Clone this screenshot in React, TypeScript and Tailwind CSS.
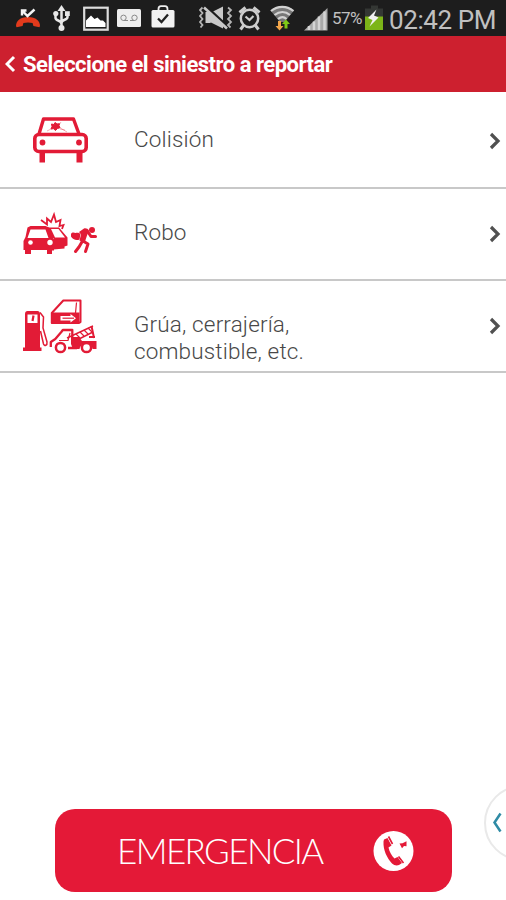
import type { ReactNode } from "react";

function MissedCallIcon() {
  return (
    <svg className="ml-4 h-9 w-6" viewBox="16 0 24 36" fill="none">
      <path d="M16 26c0-5 4-9 12-9s12 4 12 9l-.6 1.200-6-1.200-.8-3c-3-.8-6.200-.8-9.200 0l-.8 3-6 1.200z" fill="#e23a1c" />
      <path d="M22 15.500v-5h4.500M22.500 11l5 5 7-6.500" stroke="#f4f4f4" strokeWidth="2.400" />
    </svg>
  );
}

function UsbIcon() {
  return (
    <svg className="ml-[13px] h-9 w-[17px]" viewBox="53 0 17 36" fill="none">
      <path d="M61.500 9v18M55.500 14v4c0 3 6 2 6 6M67.500 14v3c0 3.500-6 2-6 6" stroke="#e8e8e8" strokeWidth="2.500" />
      <path d="M61.500 5l4 6h-8z" fill="#e8e8e8" />
      <circle cx="61.500" cy="28" r="3" fill="#e8e8e8" />
      <circle cx="55.800" cy="13.500" r="2.600" fill="#e8e8e8" />
      <path d="M65 11.200h4.800V16H65z" fill="#e8e8e8" />
    </svg>
  );
}

function PictureIcon() {
  return (
    <svg className="ml-[13px] h-9 w-[26px]" viewBox="83 0 26 36" fill="none">
      <rect x="84.200" y="7.700" width="23.500" height="22" stroke="#dcdcdc" strokeWidth="2.200" />
      <path d="M86 27v-6.500l5-5 3.500 3.500 3-1.500 3 3h2.500l2.500 2.500v4z" fill="#fff" />
    </svg>
  );
}

function VoicemailIcon() {
  return (
    <svg className="ml-2 h-9 w-6" viewBox="117 0 24 36" fill="none">
      <rect x="117" y="9" width="24" height="18" rx="1.500" fill="#ededed" />
      <circle cx="123.500" cy="17.800" r="2.700" stroke="#888" />
      <circle cx="134.500" cy="17.800" r="2.700" stroke="#888" />
      <path d="M123.500 20.500h4.500M130 20.500h4.500" stroke="#888" />
    </svg>
  );
}

function BagIcon() {
  return (
    <svg className="ml-2.5 h-9 w-6" viewBox="151 0 24 36" fill="none">
      <path d="M158.500 11V9c0-2 1.200-2.800 2.500-2.800h4c1.300 0 2.500.8 2.500 2.800v2" stroke="#ededed" strokeWidth="1.800" />
      <rect x="151.500" y="10" width="23" height="17.500" rx="1.500" fill="#f2f2f2" />
      <path d="M158 18.500l3.500 3.500 6.500-7.500" stroke="#222" strokeWidth="2.300" />
    </svg>
  );
}

function MuteIcon() {
  return (
    <svg className="ml-[23px] h-9 w-[35px]" viewBox="198 0 35 36" fill="none">
      <path d="M205.500 12h5v11h-5zM210 13l13-6.500v22L210 22z" fill="#c9c9c9" />
      <path d="M205.500 6l22 20.500" stroke="#1d1d1d" strokeWidth="3" />
      <path d="M204 7.500l23 21" stroke="#c9c9c9" strokeWidth="2.600" />
      <path d="M202.500 7.500l-2.500 2.500 2.500 3-2.500 3 2.500 3-2.500 3 2.500 3-2 2.500M228 7.500l3 2.500-3 3 3 3-3 3 3 3-3 3 2.500 2.500" stroke="#b5b5b5" strokeWidth="1.800" />
    </svg>
  );
}

function AlarmIcon() {
  return (
    <svg className="ml-[5px] h-9 w-[23px]" viewBox="238 0 23 36" fill="none">
      <circle cx="249.500" cy="18.500" r="8.700" stroke="#cdcdcd" strokeWidth="2.500" />
      <path d="M245.500 16.500l4 3.500 4-4" stroke="#cdcdcd" strokeWidth="2.200" />
      <path d="M239.500 12.500l6-5M259.500 12.500l-6-5M243.500 25.500l-3 4M255.500 25.500l3 4" stroke="#cdcdcd" strokeWidth="3" />
    </svg>
  );
}

function WifiIcon() {
  return (
    <svg className="ml-[9px] h-9 w-[25px]" viewBox="270 0 25 36" fill="none">
      <path d="M270.500 10.500c7-6 16.500-6 23.500 0l-9.500 11.500h-4.500z" fill="#777" />
      <path d="M271 11c7-5.500 15.500-5.500 22.500 0M274.500 15c5-4 11-4 15.500 0M278 19c3-2.500 6-2.500 8.500 0" stroke="#d2d2d2" strokeWidth="2.200" />
      <path d="M278 21h3v5h2.500l-4 4.500-4-4.500h2.500z" fill="#f3a64a" />
      <path d="M284.500 28.500h3v-4.500h2.500l-4-4.500-4 4.500h2.500z" fill="#7fca16" />
    </svg>
  );
}

function SignalIcon() {
  return (
    <svg className="ml-[9px] h-9 w-6" viewBox="304 0 24 36" fill="none">
      <path d="M304 30.500L327.500 8v22.500z" fill="#a9a9a9" />
      <path d="M309 26v4M314 21.500V30M319 16.500V30M324.500 11.500V30" stroke="#d4d4d4" strokeWidth="2.500" />
    </svg>
  );
}

function BatteryIcon() {
  return (
    <svg className="ml-0.5 h-9 w-[18px]" viewBox="365 0 18 36" fill="none">
      <path d="M371 5.500h7v3h5V17h-18V8.500h6z" fill="#343734" />
      <path d="M365 16.500h18V30h-18z" fill="#7cb518" />
      <path d="M376.500 9.500l-8.500 8.500 4.500 2-3 6.500 9-9-4.500-2z" fill="#f1f1f1" />
    </svg>
  );
}

function StatusBar() {
  return (
    <div className="flex h-9 items-center overflow-hidden whitespace-nowrap bg-[#1d1d1d] text-[#c0c0c0]">
      <MissedCallIcon />
      <UsbIcon />
      <PictureIcon />
      <VoicemailIcon />
      <BagIcon />
      <MuteIcon />
      <AlarmIcon />
      <WifiIcon />
      <SignalIcon />
      <span className="ml-1 w-[31px] text-[17px] leading-9 tracking-[-0.6px]">57%</span>
      <BatteryIcon />
      <span className="ml-[6px] mt-[3px] text-[26px] leading-8 tracking-[-0.4px]">02:42 PM</span>
    </div>
  );
}

function CollisionIcon() {
  return (
    <svg className="h-[70px] w-[100px]" viewBox="0 0 100 70" fill="none" stroke="#e21b36">
      <path d="M24 29l4.500-15h30l5.500 15" strokeWidth="3.400" strokeLinejoin="round" />
      <rect x="19.800" y="29.500" width="51.400" height="17" rx="4" strokeWidth="3.600" />
      <path d="M24.500 48h5.500v9.500h-5.500zM61.500 48h6v9.500h-6z" fill="#e21b36" stroke="none" />
      <circle cx="27.500" cy="37.500" r="2.900" fill="#e21b36" stroke="none" />
      <circle cx="64" cy="37.500" r="2.900" fill="#e21b36" stroke="none" />
      <path d="M36.500 19l2.500.5 1-2 2 1.500 2.500-.3-.5 2 1 2-2.500.8-2 2-2-1.800-2.500.3 1-2.500z" fill="#e21b36" strokeWidth="1" />
      <path d="M32 26l6-3M42 21l10 6M44 20l2-3M45 24l5 1" strokeWidth=".9" opacity=".4" />
    </svg>
  );
}

function RobberyIcon() {
  return (
    <svg className="h-[60px] w-[100px]" viewBox="0 0 100 60" fill="#e21b36">
      <path d="M12.500 22.500l3-1.500h15l3.500 1.500 3.500 10 1.500 2v11h-2V49h-5v-4H16v4h-6v-4H8.500v-9l2-4z" />
      <path d="M15.500 24.500h15l3 8.500h-21z" fill="#fff" />
      <circle cx="15.500" cy="37.500" r="2.300" fill="#fff" />
      <circle cx="35" cy="37.500" r="2.700" fill="#fff" />
      <path d="M33 22.500h11l8.500 10v8l-3 1v2l-11 1V33h-3z" />
      <path d="M36 24h7.500l6.500 8.500h-10z" fill="#fff" />
      <path d="M26 15l6 4.500v-6l4 3.500 3-7.500 2 7.500 4.500-2-1 6 4-1-1.500 4" fill="none" stroke="#e21b36" strokeWidth="1.800" />
      {/* thief running off with the bag */}
      <circle cx="77" cy="25" r="3" />
      <path d="M56 29c1-2 3-1.500 4.500-1 2-.5 4 0 5 1l-1 5.500c-3 1.500-7 0-8.500-3z" />
      <path d="M64 27l5-3.500c2-.5 4 .5 5 2l-2 5-2.500 7.500-5-2.500 1.500-6z" />
      <path
        d="M73 27l3 4.500h4.500M67.500 36l-3.500 6-3.500 4.500M68 36l5 3-2.500 7.500"
        fill="none"
        stroke="#e21b36"
        strokeWidth="3"
        strokeLinejoin="round"
        strokeLinecap="round"
      />
    </svg>
  );
}

function TowIcon() {
  return (
    <svg className="h-[70px] w-[100px]" viewBox="0 0 100 70" fill="none" stroke="#e21b36">
      {/* fuel pump */}
      <path d="M10 24c0-1.800 1-3 2.500-3h10c1.500 0 2.500 1.200 2.500 3v33.500h1.500V61H8v-3.500h2z" fill="#e21b36" stroke="none" />
      <path d="M12.500 24.500h10V33h-10z" fill="#fff" stroke="none" />
      <path d="M18.500 25.500l-1 5.500" strokeWidth="2.200" />
      <path d="M25 22.500l3.500 4.500-.5 11 4 14c.5 3.500-2.500 4.500-3.500 2l-3-13" strokeWidth="1.500" />
      {/* car door */}
      <path d="M36.800 23l11.500-12.500h17.200V32l-2 1H36.800z" strokeWidth="2" strokeLinejoin="round" />
      <path d="M61.500 12.500L60.500 23" strokeWidth="1.200" />
      <path d="M36.500 22.500h28V33.500h-28z" fill="#e21b36" stroke="none" />
      <path d="M45.500 26h10v-2l5.500 4.200-5.500 4.300v-2h-10z" fill="#fff" stroke="none" />
      <path d="M47.500 28.200H59" strokeWidth="1.200" />
      {/* tow truck */}
      <path d="M35.800 57v-5l4.500-3 6-7 1.500-2h9.500v9M62 58H53" strokeWidth="2.300" strokeLinejoin="round" />
      <path d="M44 50.500h9l2-7.500" strokeWidth="1.200" />
      <path d="M56 47h8l3 4h14.500v8h-4c-1-8-11-8-13 0H58l-2-5z" fill="#e21b36" stroke="none" />
      <circle cx="45.500" cy="57.500" r="4.600" fill="#fff" strokeWidth="2.500" />
      <circle cx="71.500" cy="57.500" r="4.600" fill="#fff" strokeWidth="2.500" />
      <path d="M52 48l26-12M62 50l16-8" strokeWidth="1.400" />
      <path d="M61 44l4 4M65 42l4 4M69 40l4 4M73 38l4 4" strokeWidth="1.100" />
      <path d="M76.500 36l2.500 12M74 47h6" strokeWidth="2" />
    </svg>
  );
}

function RowChevron() {
  return (
    <svg className="h-[18px] w-3" viewBox="0 0 12 18" fill="none">
      <path d="M2 2l7 7-7 7" stroke="#505050" strokeWidth="3.200" />
    </svg>
  );
}

type RowProps = {
  icon: ReactNode;
  className: string;
  children: ReactNode;
};

function ClaimRow({ icon, className, children }: RowProps) {
  return (
    <button
      className={`flex w-full items-start border-b-2 border-[#c8c8c8] text-left ${className}`}
    >
      <span className="ml-[15px] w-[119px] shrink-0">{icon}</span>
      <span className="mt-[30px] flex-1 text-[22.500px] font-light leading-[27px] tracking-[0.15px] text-[#484848]">
        {children}
      </span>
      <span className="mr-[5px] mt-9">
        <RowChevron />
      </span>
    </button>
  );
}

export default function App() {
  return (
    <div className="relative flex h-[900px] w-[506px] flex-col overflow-hidden bg-white font-['Roboto',sans-serif]">
      <StatusBar />
      <header className="flex h-14 items-center bg-[#cd202f] pl-[5px] text-white">
        <svg className="h-[18px] w-[11px]" viewBox="0 0 11 18" fill="none">
          <path d="M9 2L2 9l7 7" stroke="currentColor" strokeWidth="3" />
        </svg>
        <h1 className="ml-[7px] whitespace-nowrap text-[22px] font-bold tracking-[-0.5px]">
          Seleccione el siniestro a reportar
        </h1>
      </header>

      <main>
        <ClaimRow className="h-[97px] pt-1" icon={<div className="pt-[9px]"><CollisionIcon /></div>}>
          Colisión
        </ClaimRow>
        <ClaimRow className="h-[92px]" icon={<div className="pt-4"><RobberyIcon /></div>}>
          Robo
        </ClaimRow>
        <ClaimRow className="h-[92px]" icon={<div className="pt-[9px]"><TowIcon /></div>}>
          Grúa, cerrajería,
          <br />
          combustible, etc.
        </ClaimRow>
      </main>

      <button className="mb-2 ml-[55px] mt-auto flex h-[83px] w-[397px] items-center rounded-[20px] bg-[#e41937] text-white">
        <span className="ml-[62px] w-[256px] text-left font-['Lato',sans-serif] text-[35px] font-light tracking-[-1.6px]">
          EMERGENCIA
        </span>
        <svg className="h-[42px] w-[42px]" viewBox="0 0 42 42" fill="#e41937">
          <circle cx="20.500" cy="21" r="20" fill="#fff" />
          <path d="M11 9.500l3.500-1.500 4 7.500-3 2c1 4.500 3 8 6 11l3-1.500 4.500 6-3 2c-2 1-5 .5-7-1.500C14 28 10 20 10.500 11.500z" />
          <path d="M15.500 6.500l4 7.500M25.500 26.500l5 6.500" stroke="#e41937" strokeWidth="1.600" />
          <path d="M26.500 13.500l3-.2 4-2v5l-2.500-.3-2 2.200z" />
        </svg>
      </button>

      {/* floating side handle, cut off by the screen edge */}
      <div className="absolute left-[484px] top-[785px] h-[76px] w-[76px] rounded-full border-2 border-[#e9e9e9] bg-white">
        <svg className="ml-1.5 mt-[25px] h-[22px] w-3" viewBox="0 0 12 22" fill="none">
          <path d="M8.500 1.500L2.500 10.500l6 9" stroke="#2f8ba5" strokeWidth="2.500" />
        </svg>
      </div>
    </div>
  );
}
